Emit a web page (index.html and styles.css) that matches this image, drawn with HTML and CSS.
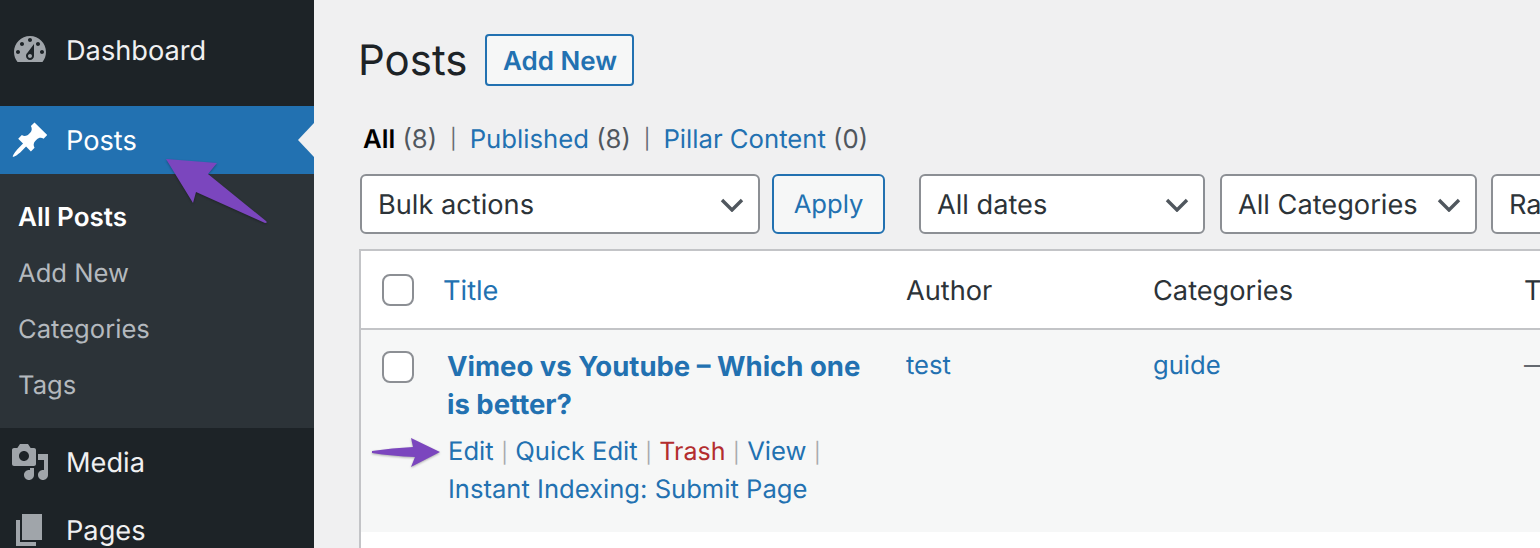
FILE: index.html
```html
<!DOCTYPE html>
<html lang="en">
<head>
<meta charset="utf-8">
<title>Posts</title>
<link rel="stylesheet" href="styles.css">
</head>
<body>
<div class="page">
  <nav class="sidebar">
    <a class="menu-item first">
      <svg class="menu-icon" viewBox="0 0 20 20"><path d="M3.76 16h12.48c1.1-1.37 1.76-3.11 1.76-5 0-4.42-3.58-8-8-8s-8 3.58-8 8c0 1.89.66 3.63 1.76 5zM10 4c.55 0 1 .45 1 1s-.45 1-1 1-1-.45-1-1 .45-1 1-1zM6 6c.55 0 1 .45 1 1s-.45 1-1 1-1-.45-1-1 .45-1 1-1zm8 0c.55 0 1 .45 1 1s-.45 1-1 1-1-.45-1-1 .45-1 1-1zm-5.37 5.55L12 7v6c0 1.1-.9 2-2 2s-2-.9-2-2c0-.57.24-1.08.63-1.45zM4 10c.55 0 1 .45 1 1s-.45 1-1 1-1-.45-1-1 .45-1 1-1zm12 0c.55 0 1 .45 1 1s-.45 1-1 1-1-.45-1-1 .45-1 1-1zm-5 3c0-.55-.45-1-1-1s-1 .45-1 1 .45 1 1 1 1-.45 1-1z"/></svg>
      <span>Dashboard</span>
    </a>
    <a class="menu-item current">
      <svg class="menu-icon" viewBox="0 0 20 20"><path d="M10.44 3.02l1.82-1.82 6.36 6.35-1.83 1.82c-1.05-.68-2.48-.57-3.41.36l-.75.75c-.92.93-1.04 2.35-.35 3.41l-1.83 1.82-2.41-2.41-2.8 2.79c-.42.42-3.38 2.71-3.8 2.29s1.86-3.39 2.28-3.81l2.79-2.79L4.1 9.36l1.83-1.82c1.05.69 2.48.57 3.41-.36l.75-.75c.93-.92 1.04-2.35.35-3.41z"/></svg>
      <span>Posts</span>
      <i class="notch"></i>
    </a>
    <ul class="submenu">
      <li class="active">All Posts</li>
      <li>Add New</li>
      <li>Categories</li>
      <li>Tags</li>
    </ul>
    <a class="menu-item">
      <svg class="menu-icon" viewBox="0 0 20 20"><path d="M13 11V4c0-.55-.45-1-1-1h-1.67L9 1H5L3.67 3H2c-.55 0-1 .45-1 1v7c0 .55.45 1 1 1h10c.55 0 1-.45 1-1zM7 4.5c1.38 0 2.5 1.12 2.5 2.5S8.38 9.5 7 9.5 4.5 8.38 4.5 7 5.62 4.5 7 4.5zM14 6h5v10.5c0 1.38-1.12 2.5-2.5 2.5S14 17.88 14 16.5s1.12-2.5 2.5-2.5c.17 0 .34.02.5.05V9h-3V6zm-4 8.05V13h2v3.5c0 1.38-1.12 2.5-2.5 2.5S7 17.88 7 16.5 8.12 14 9.5 14c.17 0 .34.02.5.05z"/></svg>
      <span>Media</span>
    </a>
    <a class="menu-item">
      <svg class="menu-icon" viewBox="0 0 20 20"><path d="M6 15V2h10v13H6zm-1 1h8v2H3V5h2v11z"/></svg>
      <span>Pages</span>
    </a>
  </nav>

  <main class="content">
    <header class="heading">
      <h1>Posts</h1>
      <a class="btn add-new">Add New</a>
    </header>

    <ul class="views">
      <li><b>All</b> <em>(8)</em></li>
      <li class="sep">|</li>
      <li><a>Published</a> <em>(8)</em></li>
      <li class="sep">|</li>
      <li><a>Pillar Content</a> <em>(0)</em></li>
    </ul>

    <div class="filters">
      <div class="select w-bulk">Bulk actions<svg class="chev" viewBox="0 0 24 14"><path d="M2 2l10 10L22 2"/></svg></div>
      <a class="btn apply">Apply</a>
      <div class="select w-dates">All dates<svg class="chev" viewBox="0 0 24 14"><path d="M2 2l10 10L22 2"/></svg></div>
      <div class="select w-cats">All Categories<svg class="chev" viewBox="0 0 24 14"><path d="M2 2l10 10L22 2"/></svg></div>
      <div class="select w-rank">Rank Math</div>
    </div>

    <section class="table">
      <div class="row head">
        <div class="cell"><span class="check"></span></div>
        <div class="cell"><a>Title</a></div>
        <div class="cell">Author</div>
        <div class="cell">Categories</div>
        <div class="cell">Tags</div>
      </div>
      <div class="row post">
        <div class="cell"><span class="check"></span></div>
        <div class="cell title-cell">
          <a class="post-title">Vimeo vs Youtube – Which one is better?</a>
          <div class="actions">
            <a>Edit</a><s>|</s><a>Quick Edit</a><s>|</s><a class="trash">Trash</a><s>|</s><a>View</a><s>|</s><br>
            <a>Instant Indexing: Submit Page</a>
          </div>
        </div>
        <div class="cell link-cell"><a>test</a></div>
        <div class="cell link-cell"><a>guide</a></div>
        <div class="cell dash">—</div>
      </div>
      <div class="row blank"></div>
    </section>
  </main>

  <svg class="arrow arrow-posts" viewBox="0 0 120 80"><path d="M6 9L57 13 48 24 106 71Q108 73 105 73L36 42 33 53z"/></svg>
  <svg class="arrow arrow-edit" viewBox="0 0 80 40"><path d="M2 21Q22 18 43 17L41 8 70 22 41 37 45 27Q22 26 2 23z"/></svg>
</div>
</body>
</html>
```

FILE: styles.css
```css
* { box-sizing: border-box; }
html, body { margin: 0; height: 100%; overflow: hidden; }
body {
  font-family: Inter, "Liberation Sans", sans-serif;
  font-size: 25.6px;
  color: #2c3338;
  background: #f0f0f1;
  text-rendering: geometricPrecision;
}
a { color: #2271b1; text-decoration: none; }
ul { list-style: none; margin: 0; padding: 0; }

.page { position: relative; display: flex; width: 1540px; height: 548px; overflow: hidden; }

.sidebar { flex: 0 0 314px; height: 548px; background: #1d2327; overflow: hidden; padding-top: 16px; }
.menu-item { position: relative; display: flex; align-items: center; gap: 16px; height: 68px; padding-left: 10px; color: #f0f0f1; font-size: 27.2px; }
.menu-item.first { margin-bottom: 22px; }
.menu-icon { flex: none; width: 40px; height: 40px; fill: #a0a5aa; }
.menu-item.current { background: #2271b1; color: #fff; }
.menu-item.current .menu-icon { fill: #fff; }
.notch { position: absolute; right: 0; top: 17px; border: 17px solid transparent; border-left: 0; border-right: 16px solid #f0f0f1; }
.submenu { background: #2c3338; padding: 16px 0 14px 18px; color: #b4b9be; }
.submenu li { height: 56px; line-height: 56px; }
.submenu .active { color: #fff; font-weight: 600; font-size: 26px; }

.content { flex: 1; min-width: 0; padding: 34px 0 0 45px; }
.heading { display: flex; align-items: center; gap: 18px; height: 52px; }
h1 { margin: 0 0 0 -1px; font-size: 42px; font-weight: 400; color: #1d2327; }
.btn { display: flex; align-items: center; justify-content: center; border: 2px solid #2271b1; border-radius: 4px; background: #f6f7f7; }
.add-new { width: 149px; height: 52px; padding-top: 2px; font-weight: 600; font-size: 26px; }

.views { display: flex; gap: 13px; height: 32px; margin: 37px 0 0 4px; align-items: center; white-space: nowrap; font-size: 25.7px; }
.views b { color: #000; font-weight: 600; }
.views em { font-style: normal; color: #50575e; }
.views .sep { color: #646970; font-size: 20px; }

.filters { display: flex; align-items: stretch; height: 60px; margin: 19px 0 0 1px; white-space: nowrap; }
.select { position: relative; display: flex; align-items: center; flex: none; height: 60px; padding-left: 16px; background: #fff; border: 2px solid #8c8f94; border-radius: 6px; color: #2c3338; font-size: 27.2px; }
.chev { position: absolute; right: 14px; top: 22px; width: 24px; height: 14px; fill: none; stroke: #50575e; stroke-width: 3.4; }
.w-bulk { width: 400px; }
.apply { flex: none; width: 113px; margin: 0 34px 0 12px; border-radius: 6px; }
.w-dates { width: 286px; margin-right: 15px; }
.w-cats { width: 257px; margin-right: 14px; }
.w-rank { width: 200px; }

.table { width: 1300px; margin-top: 15px; background: #fff; border-top: 2px solid #c3c4c7; border-left: 2px solid #c3c4c7; }
.row { display: grid; grid-template-columns: 82px 463px 247px 371px 1fr; }
.cell { min-width: 0; }
.head { height: 79px; padding-top: 1px; border-bottom: 2px solid #c3c4c7; align-items: center; background: #fff; font-size: 27.2px; }
.head .cell:first-child, .post .cell:first-child { padding-left: 21px; }
.check { display: block; width: 32px; height: 32px; background: #fff; border: 2px solid #8c8f94; border-radius: 8px; }
.post { height: 202px; background: #f6f7f7; padding-top: 21px; line-height: 32px; }
.title-cell { padding-left: 4px; padding-right: 36px; }
.post-title { display: block; font-weight: 700; font-size: 27.5px; line-height: 38px; margin-top: -4px; }
.actions { margin-top: 10px; padding-left: 1px; line-height: 38px; white-space: nowrap; }
.actions s { text-decoration: none; color: #a7aaad; font-size: 20px; line-height: 1; margin: 0 7.5px; }
.actions .trash { color: #b32d2e; font-size: 25px; line-height: 1; }
.link-cell { margin-top: -1px; }
.dash { color: #646970; margin-top: -1px; }
.blank { height: 40px; }

.arrow { position: absolute; fill: #7b46be; filter: drop-shadow(0 1px 1px rgba(0,0,0,.3)); }
.arrow-posts { left: 160px; top: 150px; width: 120px; height: 80px; }
.arrow-edit { left: 370px; top: 430px; width: 80px; height: 40px; }
```
